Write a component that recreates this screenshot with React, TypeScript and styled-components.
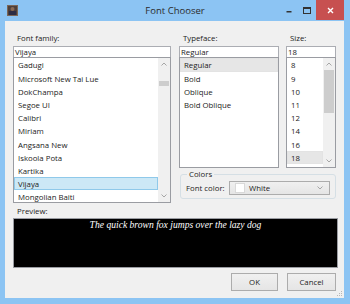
import styled, { createGlobalStyle } from "styled-components";

const GlobalStyle = createGlobalStyle`
  html, body {
    margin: 0;
    padding: 0;
  }
  body {
    width: 350px;
    height: 304px;
    overflow: hidden;
    font-family: "Open Sans", "Noto Sans", sans-serif;
    color: #222;
  }
  * {
    box-sizing: border-box;
  }
`;

const families = [
  "Gadugi",
  "Microsoft New Tai Lue",
  "DokChampa",
  "Segoe UI",
  "Calibri",
  "Miriam",
  "Angsana New",
  "Iskoola Pota",
  "Kartika",
  "Vijaya",
  "Mongolian Baiti",
];
const typefaces = ["Regular", "Bold", "Oblique", "Bold Oblique"];
const sizes = ["8", "9", "10", "11", "12", "14", "16", "18"];

const Window = styled.div`
  width: 350px;
  height: 304px;
  background: #8cc4f3;
  display: flex;
  flex-direction: column;
  padding: 0 6px 6px 5px;
`;

const TitleBar = styled.div`
  height: 21px;
  display: grid;
  grid-template-columns: 1fr auto 1fr;
  align-items: start;
`;

const AppIcon = styled.svg`
  margin: 5px 0 0 2px;
  display: block;
`;

const Title = styled.div`
  font-size: 9.5px;
  line-height: 21px;
  color: #2b2b2b;
  margin-left: 1px;
`;

const Controls = styled.div`
  justify-self: end;
  display: flex;
`;

const CaptionButton = styled.div<{ $close?: boolean }>`
  width: ${(p) => (p.$close ? "28px" : "18px")};
  height: 20px;
  display: flex;
  align-items: center;
  justify-content: center;
  background: ${(p) => (p.$close ? "#c75050" : "transparent")};
`;

const Client = styled.div`
  flex: 1;
  background: #f0f0f0;
  padding: 11px 7px 0 8px;
  display: flex;
  flex-direction: column;
  position: relative;
`;

const TopSection = styled.div`
  display: flex;
  gap: 8px;
  height: 171px;
`;

const Column = styled.div<{ $width: number }>`
  width: ${(p) => p.$width}px;
  display: flex;
  flex-direction: column;
`;

const FieldRow = styled.div`
  display: flex;
  gap: 7px;
`;

const Label = styled.div`
  font-size: 7.8px;
  line-height: 13px;
  height: 13px;
  padding-left: 4px;
  margin-bottom: 1px;
`;

const TextBox = styled.div`
  height: 12px;
  border: 1px solid #abadb3;
  background: #fff;
  font-size: 7.8px;
  line-height: 10px;
  padding-left: 1px;
`;

const ListBox = styled.div<{ $height: number }>`
  height: ${(p) => p.$height}px;
  margin-top: -1px;
  border: 1px solid #9a9ca2;
  background: #fff;
  display: flex;
  overflow: hidden;
`;

const Items = styled.div`
  flex: 1;
  padding-top: 0.4px;
  overflow: hidden;
`;

const Item = styled.div<{ $state?: "focus" | "blur" }>`
  height: 13.2px;
  font-size: 7.8px;
  line-height: 12px;
  padding-left: 3px;
  white-space: nowrap;
  border: 1px solid
    ${(p) =>
      p.$state === "focus" ? "#8fc9ea" : p.$state === "blur" ? "#e3e3e3" : "transparent"};
  background: ${(p) =>
    p.$state === "focus" ? "#cce8f6" : p.$state === "blur" ? "#e6e6e6" : "transparent"};
`;

const ScrollBar = styled.div`
  width: 12px;
  background: #f0f0f0;
  display: flex;
  flex-direction: column;
`;

const Arrow = styled.div`
  height: 12px;
  display: flex;
  align-items: center;
  justify-content: center;
`;

const Track = styled.div`
  flex: 1;
  padding: 0 1px;
`;

const Thumb = styled.div<{ $top: number; $height: number }>`
  margin-top: ${(p) => p.$top}px;
  height: ${(p) => p.$height}px;
  background: #cdcdcd;
`;

const GroupBox = styled.fieldset`
  margin: 1px 0 0 1px;
  padding: 0 5px 3px 5px;
  border: 1px solid #d5dfe5;
  border-radius: 3px;
  min-width: 0;
`;

const Legend = styled.legend`
  font-size: 7.8px;
  line-height: 10px;
  padding: 0 2px;
  margin-left: 1px;
`;

const ColorRow = styled.div`
  display: flex;
  align-items: center;
  height: 14px;
  margin-top: 2px;
`;

const ColorLabel = styled.div`
  width: 43px;
  font-size: 7.8px;
`;

const ComboBox = styled.div`
  flex: 1;
  height: 14px;
  border: 1px solid #acacac;
  background: linear-gradient(#f0f0f0, #e5e5e5);
  display: flex;
  align-items: center;
  padding: 0 6px 0 5px;
  font-size: 7.8px;
`;

const Swatch = styled.div<{ $color: string }>`
  width: 10px;
  height: 10px;
  background: ${(p) => p.$color};
  border: 1px solid #d9d9d9;
  margin-right: 4px;
`;

const ComboText = styled.div`
  flex: 1;
`;

const PreviewLabel = styled.div`
  font-size: 7.8px;
  line-height: 12px;
  padding-left: 4px;
  margin-top: 2px;
  height: 13px;
`;

const Preview = styled.div`
  height: 50px;
  width: 325px;
  background: #000;
  border: 1px solid #9a9ca2;
  color: #fff;
  font-family: "Liberation Serif", "Times New Roman", serif;
  font-style: italic;
  font-size: 9.6px;
  line-height: 11px;
  text-align: center;
`;

const ButtonRow = styled.div`
  display: flex;
  justify-content: flex-end;
  gap: 9px;
  margin-top: 5px;
  padding-right: 1px;
`;

const Button = styled.div<{ $width: number }>`
  width: ${(p) => p.$width}px;
  height: 18px;
  border: 1px solid #acacac;
  background: linear-gradient(#f0f0f0, #e5e5e5);
  font-size: 7.8px;
  display: flex;
  align-items: center;
  justify-content: center;
`;

const Grip = styled.svg`
  position: absolute;
  right: 1px;
  bottom: 1px;
`;

const Chevron = ({ up }: { up?: boolean }) => (
  <svg width="6" height="4" viewBox="0 0 6 4">
    <polyline
      points={up ? "0.5,3.5 3,1 5.5,3.5" : "0.5,0.5 3,3 5.5,0.5"}
      fill="none"
      stroke="#a6a6a6"
      strokeWidth="1"
    />
  </svg>
);

const VScroll = ({ top, height }: { top: number; height: number }) => (
  <ScrollBar>
    <Arrow>
      <Chevron up />
    </Arrow>
    <Track>
      <Thumb $top={top} $height={height} />
    </Track>
    <Arrow>
      <Chevron />
    </Arrow>
  </ScrollBar>
);

const App = () => {
  return (
    <>
      <GlobalStyle />
      <Window>
        <TitleBar>
          <AppIcon width="11" height="11" viewBox="0 0 11 11">
            <rect x="0" y="0" width="11" height="11" fill="#7a6658" />
            <rect x="1" y="1" width="9" height="9" fill="#4d3f3a" />
            <circle cx="5.5" cy="4" r="2" fill="#8a6a55" />
            <rect x="2" y="6" width="7" height="4" fill="#2c2c44" />
          </AppIcon>
          <Title>Font Chooser</Title>
          <Controls>
            <CaptionButton>
              <svg width="6" height="6" viewBox="0 0 6 6">
                <rect x="0.5" y="4" width="5" height="1.5" fill="#333" />
              </svg>
            </CaptionButton>
            <CaptionButton>
              <svg width="8" height="7" viewBox="0 0 8 7">
                <rect x="0.5" y="0.5" width="7" height="6" fill="none" stroke="#333" />
                <rect x="0.5" y="0.5" width="7" height="1.5" fill="#333" />
              </svg>
            </CaptionButton>
            <CaptionButton $close>
              <svg width="7" height="7" viewBox="0 0 7 7">
                <path d="M1 1 L6 6 M6 1 L1 6" stroke="#fff" strokeWidth="1.4" />
              </svg>
            </CaptionButton>
          </Controls>
        </TitleBar>
        <Client>
          <TopSection>
            <Column $width={158}>
              <Label>Font family:</Label>
              <TextBox>Vijaya</TextBox>
              <ListBox $height={146}>
                <Items>
                  {families.map((f) => (
                    <Item key={f} $state={f === "Vijaya" ? "focus" : undefined}>
                      {f}
                    </Item>
                  ))}
                </Items>
                <VScroll top={11} height={5} />
              </ListBox>
            </Column>
            <Column $width={157}>
              <FieldRow>
                <Column $width={100}>
                  <Label>Typeface:</Label>
                  <TextBox>Regular</TextBox>
                  <ListBox $height={111}>
                    <Items>
                      {typefaces.map((t) => (
                        <Item key={t} $state={t === "Regular" ? "blur" : undefined}>
                          {t}
                        </Item>
                      ))}
                    </Items>
                  </ListBox>
                </Column>
                <Column $width={50}>
                  <Label>Size:</Label>
                  <TextBox>18</TextBox>
                  <ListBox $height={111}>
                    <Items>
                      {sizes.map((s) => (
                        <Item key={s} $state={s === "18" ? "blur" : undefined}>
                          {s}
                        </Item>
                      ))}
                    </Items>
                    <VScroll top={0} height={43} />
                  </ListBox>
                </Column>
              </FieldRow>
              <GroupBox>
                <Legend>Colors</Legend>
                <ColorRow>
                  <ColorLabel>Font color:</ColorLabel>
                  <ComboBox>
                    <Swatch $color="#fff" />
                    <ComboText>White</ComboText>
                    <Chevron />
                  </ComboBox>
                </ColorRow>
              </GroupBox>
            </Column>
          </TopSection>
          <PreviewLabel>Preview:</PreviewLabel>
          <Preview>The quick brown fox jumps over the lazy dog</Preview>
          <ButtonRow>
            <Button $width={47}>OK</Button>
            <Button $width={49}>Cancel</Button>
          </ButtonRow>
          <Grip width="7" height="7" viewBox="0 0 7 7">
            {[
              [5, 1],
              [3, 3],
              [5, 3],
              [1, 5],
              [3, 5],
              [5, 5],
            ].map(([x, y]) => (
              <rect key={`${x}-${y}`} x={x} y={y} width="1" height="1" fill="#b8b8b8" />
            ))}
          </Grip>
        </Client>
      </Window>
    </>
  );
};

export default App;
